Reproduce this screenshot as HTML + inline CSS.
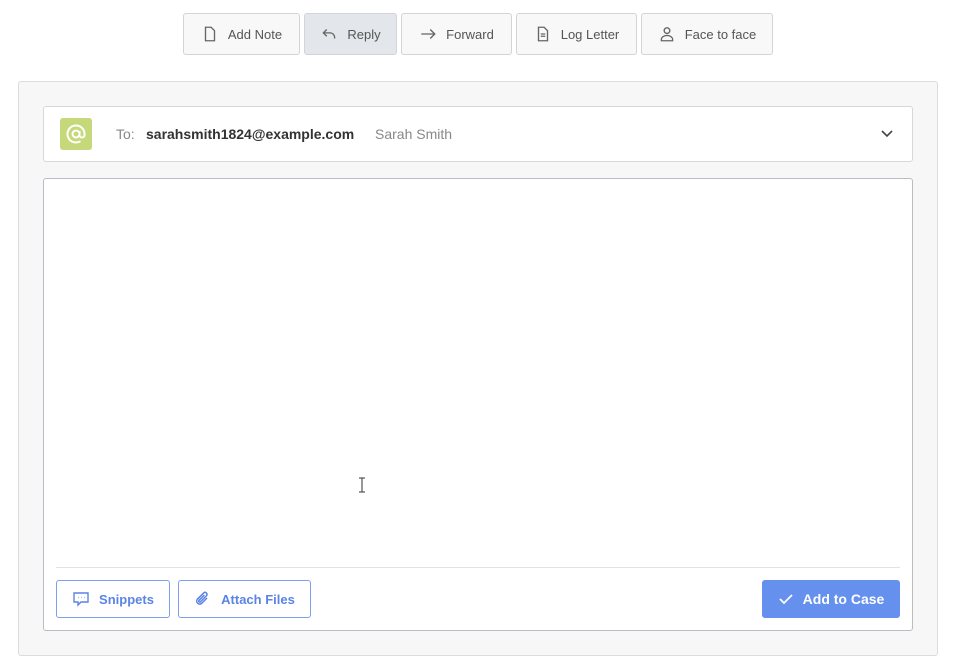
<!DOCTYPE html>
<html><head><style>
*{box-sizing:border-box;margin:0;padding:0}
body{width:955px;height:671px;background:#fff;font-family:"Liberation Sans",sans-serif;position:relative;overflow:hidden}
.tb{position:absolute;top:13px;height:42px;border:1px solid #d2d4d8;border-radius:3px;background:#f8f8f8;color:#555;font-size:13px;display:flex;align-items:center;justify-content:center;gap:9px}
.tb svg{width:18px;height:18px;flex-shrink:0;fill:none;stroke:#666;stroke-width:1.2}
.panel{position:absolute;left:18px;top:81px;width:920px;height:575px;background:#f7f7f7;border:1px solid #dcdcdc;border-radius:3px}
.to{position:absolute;left:43px;top:106px;width:870px;height:56px;background:#fff;border:1px solid #d5d8dc;border-radius:3px}
.ed{position:absolute;left:43px;top:178px;width:870px;height:453px;background:#fff;border:1px solid #b9bcc4;border-radius:3px}
.bb{position:absolute;top:580px;height:38px;border:1px solid #7e9ff0;border-radius:3px;background:#fff;color:#5b84e6;font-weight:bold;font-size:13px;display:flex;align-items:center;justify-content:center;gap:9px}
.bb svg{flex-shrink:0}
</style></head><body>
<div class="tb" style="left:183px;width:117px"><svg viewBox="0 0 16 16"><path d="M4 2h5l3 3v9H4z"/></svg>Add Note</div>
<div class="tb" style="left:304px;width:93px;background:#e3e6ea"><svg viewBox="0 0 16 16"><path d="M6 4L3 7l3 3M3 7h6a4 4 0 0 1 4 4v1"/></svg>Reply</div>
<div class="tb" style="left:401px;width:111px"><svg viewBox="0 0 16 16"><path d="M2 8h12M10 4l4 4-4 4"/></svg>Forward</div>
<div class="tb" style="left:516px;width:121px"><svg viewBox="0 0 16 16"><path d="M4 2h5l3 3v9H4zM6 8h4M6 10h4"/></svg>Log Letter</div>
<div class="tb" style="left:641px;width:132px"><svg viewBox="0 0 16 16"><circle cx="8" cy="5" r="2.5"/><path d="M3 14v-1a4 3 0 0 1 10 0v1z"/></svg>Face to face</div>
<div class="panel"></div>
<div class="to">
 <div style="position:absolute;left:16px;top:11px;width:32px;height:32px;background:#c5d87a;border-radius:3px;display:flex;align-items:center;justify-content:center"><svg width="22" height="22" viewBox="0 0 22 22" fill="none" stroke="#fff" stroke-width="2"><circle cx="11" cy="11" r="3.5"/><path d="M14.5 8v4a2.5 2.5 0 0 0 5 0v-1a8.5 8.5 0 1 0-4 7.2"/></svg></div>
 <div style="position:absolute;left:72px;top:19px;font-size:14px;color:#888">To:</div>
 <div style="position:absolute;left:102px;top:19px;font-size:14px;color:#333;font-weight:bold">sarahsmith1824@example.com</div>
 <div style="position:absolute;left:331px;top:19px;font-size:14px;color:#888">Sarah Smith</div>
 <svg style="position:absolute;right:18px;top:22px" width="14" height="10" viewBox="0 0 14 10" fill="none" stroke="#444" stroke-width="1.6"><path d="M2 2l5 5 5-5"/></svg>
</div>
<div class="ed"><div style="position:absolute;left:12px;right:12px;top:388px;border-top:1px solid #e2e2e2"></div>
<svg style="position:absolute;left:314px;top:298px" width="8" height="16" viewBox="0 0 8 16" fill="none" stroke="#333" stroke-width="1"><path d="M1 1h6M1 15h6M4 1v14"/></svg></div>
<div class="bb" style="left:56px;width:114px"><svg width="18" height="16" viewBox="0 0 18 16" fill="none" stroke="#5b84e6" stroke-width="1.4"><path d="M2 2h14v9H9l-3 3v-3H2z"/><path d="M6 6.5h.5M9 6.5h.5M12 6.5h.5"/></svg>Snippets</div>
<div class="bb" style="left:178px;width:133px"><svg width="18" height="18" viewBox="0 0 18 18" fill="none" stroke="#5b84e6" stroke-width="1.5"><path d="M13 8l-5.5 5.5a3 3 0 0 1-4.2-4.2l6.5-6.5a2 2 0 0 1 2.8 2.8l-6.3 6.3a1 1 0 0 1-1.4-1.4l5.5-5.5"/></svg>Attach Files</div>
<div class="bb" style="left:762px;width:138px;background:#6690ee;border-color:#6690ee;color:#fff;font-size:14px"><svg width="16" height="14" viewBox="0 0 16 14" fill="none" stroke="#fff" stroke-width="1.8"><path d="M2 7l4 4 8-8"/></svg>Add to Case</div>
</body></html>
